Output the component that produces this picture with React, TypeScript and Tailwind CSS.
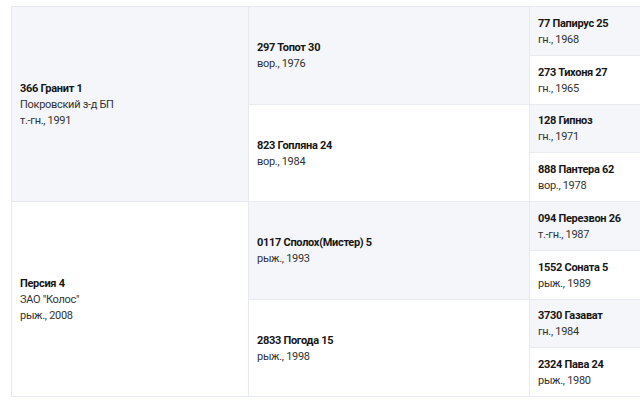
const sire = {
  name: "366 Гранит 1",
  lines: ["Покровский з-д БП", "т.-гн., 1991"],
};
const dam = {
  name: "Персия 4",
  lines: ['ЗАО "Колос"', "рыж., 2008"],
};

const parents = [
  { name: "297 Топот 30", lines: ["вор., 1976"] },
  { name: "823 Гопляна 24", lines: ["вор., 1984"] },
  { name: "0117 Сполох(Мистер) 5", lines: ["рыж., 1993"] },
  { name: "2833 Погода 15", lines: ["рыж., 1998"] },
];

const grands = [
  { name: "77 Папирус 25", lines: ["гн., 1968"] },
  { name: "273 Тихоня 27", lines: ["гн., 1965"] },
  { name: "128 Гипноз", lines: ["гн., 1971"] },
  { name: "888 Пантера 62", lines: ["вор., 1978"] },
  { name: "094 Перезвон 26", lines: ["т.-гн., 1987"] },
  { name: "1552 Соната 5", lines: ["рыж., 1989"] },
  { name: "3730 Газават", lines: ["гн., 1984"] },
  { name: "2324 Пава 24", lines: ["рыж., 1980"] },
];

type Horse = { name: string; lines: string[] };

function Cell({
  horse,
  shaded,
  className,
}: {
  horse: Horse;
  shaded: boolean;
  className: string;
}) {
  return (
    <div
      className={`flex flex-col justify-center border-r border-b border-[#e7ebf0] px-[8px] pt-[2px] ${
        shaded ? "bg-[#f4f6f9]" : "bg-white"
      } ${className}`}
    >
      <div className="font-bold text-[#161616]">{horse.name}</div>
      {horse.lines.map((l) => (
        <div key={l} className="text-[#333]">
          {l}
        </div>
      ))}
    </div>
  );
}

export default function App() {
  return (
    <div className="w-[640px] h-[416px] overflow-hidden bg-white pl-[11px] pt-[6px]">
      <div
        className="grid w-[660px] h-[391px] grid-cols-[237px_281px_1fr] grid-rows-8 border-l border-t border-[#e7ebf0] text-[11px] leading-[16px] tracking-[-0.3px]"
        style={{ fontFamily: "Roboto, sans-serif" }}
      >
        <Cell horse={sire} shaded className="col-start-1 row-start-1 row-span-4" />
        <Cell horse={dam} shaded={false} className="col-start-1 row-start-5 row-span-4" />
        <Cell horse={parents[0]} shaded className="col-start-2 row-start-1 row-span-2" />
        <Cell horse={parents[1]} shaded={false} className="col-start-2 row-start-3 row-span-2" />
        <Cell horse={parents[2]} shaded className="col-start-2 row-start-5 row-span-2" />
        <Cell horse={parents[3]} shaded={false} className="col-start-2 row-start-7 row-span-2" />
        <Cell horse={grands[0]} shaded className="col-start-3 row-start-1" />
        <Cell horse={grands[1]} shaded={false} className="col-start-3 row-start-2" />
        <Cell horse={grands[2]} shaded className="col-start-3 row-start-3" />
        <Cell horse={grands[3]} shaded={false} className="col-start-3 row-start-4" />
        <Cell horse={grands[4]} shaded className="col-start-3 row-start-5" />
        <Cell horse={grands[5]} shaded={false} className="col-start-3 row-start-6" />
        <Cell horse={grands[6]} shaded className="col-start-3 row-start-7" />
        <Cell horse={grands[7]} shaded={false} className="col-start-3 row-start-8" />
      </div>
    </div>
  );
}
